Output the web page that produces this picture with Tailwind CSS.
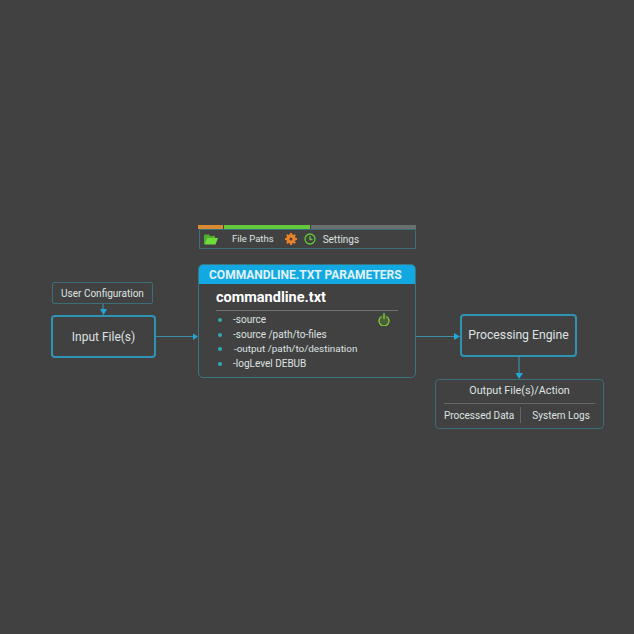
<!doctype html>
<html lang="en">
<head>
<meta charset="UTF-8" />
<title>commandline.txt diagram</title>
<script src="https://cdn.jsdelivr.net/npm/@tailwindcss/browser@4"></script>
</head>
<body class="bg-[#414141] font-[Roboto,sans-serif] text-[#dfe2e2]">
<div class="relative w-[634px] h-[634px] overflow-hidden">

  <!-- connectors -->
  <svg class="absolute left-0 top-0" width="634" height="634" viewBox="0 0 634 634" fill="none">
    <path d="M103 304V310M156 336.500H193M416 336.500H454M519 357V373" stroke="#3c8ea6" stroke-width="1.200"/>
    <path d="M100 309H107L103.500 315ZM193 333.500L198 336.500L193 340ZM454 333L460 336.500L454 340ZM515.500 373H523L519 379Z" fill="#22a9d8"/>
  </svg>

  <!-- user config -->
  <div class="absolute left-[52px] top-[282px] w-[101px] h-[22px] flex items-center justify-center border border-[#3a6f7a] rounded-[2px] text-[10px]">User Configuration</div>

  <!-- input -->
  <div class="absolute left-[51px] top-[315px] w-[105px] h-[43px] flex items-center justify-center border-2 border-[#2f93b5] rounded-[4px] text-[12px]">Input File(s)</div>

  <!-- tabs -->
  <div class="absolute left-[198px] top-[225px] w-[218px] flex flex-col">
    <div class="flex gap-px h-[4px]">
      <div class="w-[25px] bg-[#d98a35]"></div>
      <div class="w-[86px] bg-[#62c93a]"></div>
      <div class="flex-1 bg-[#6c6f6f]"></div>
    </div>
    <div class="h-[20px] ml-px flex items-center border border-[#3a6f7a] text-[9.500px]">
      <svg class="ml-[4px]" width="14" height="11" viewBox="0 0 14 11"><path d="M0 1.500Q0 .5 1 .5H5L6 2H11V4H3L1 10H0Z" fill="#4fae2d"/><path d="M3 4H14L11.500 10.500H.5Z" fill="#6fdc3c"/></svg>
      <span class="ml-[14px]">File Paths</span>
      <svg class="ml-[11px]" width="12" height="12" viewBox="0 0 12 12"><circle cx="6" cy="6" r="3.500" fill="none" stroke="#e8832b" stroke-width="2.500"/><path d="M6 0V12M0 6H12M1.800 1.800L10.200 10.200M10.200 1.800L1.800 10.200" stroke="#e8832b" stroke-width="2"/><circle cx="6" cy="6" r="1.500" fill="#5a4030"/></svg>
      <svg class="ml-[7px]" width="12" height="12" viewBox="0 0 12 12" fill="none" stroke="#62c93a" stroke-width="1.300"><circle cx="6" cy="6" r="5"/><path d="M6 3V6.500H8.500"/></svg>
      <span class="ml-[7px] text-[10px]">Settings</span>
    </div>
  </div>

  <!-- parameters card -->
  <div class="absolute left-[198px] top-[264px] w-[218px] h-[114px] border border-[#3a7682] rounded-[5px] overflow-hidden">
    <div class="h-[19px] -mx-px bg-[#12a9e2] flex items-center pl-[11px] text-[12px] font-bold text-[#e0f2f7]">COMMANDLINE.TXT PARAMETERS</div>
    <div class="pl-[17px] pr-[17px]">
      <div class="mt-[5px] text-[14.500px] leading-[17px] font-bold text-white">commandline.txt</div>
      <div class="mt-[4px] h-px bg-[#707272]"></div>
      <div class="mt-[2px] flex justify-between">
        <ul class="ml-[2px] flex flex-col text-[10px] leading-[14.500px]">
          <li class="flex items-center"><span class="w-[4px] h-[4px] rounded-full bg-[#2fa9b5] mr-[11px]"></span>-source</li>
          <li class="flex items-center"><span class="w-[4px] h-[4px] rounded-full bg-[#2fa9b5] mr-[11px]"></span>-source /path/to-files</li>
          <li class="flex items-center"><span class="w-[4px] h-[4px] rounded-full bg-[#2fa9b5] mr-[12px]"></span><span class="text-[9.900px]">-output /path/to/destination</span></li>
          <li class="flex items-center"><span class="w-[4px] h-[4px] rounded-full bg-[#2fa9b5] mr-[11px]"></span>-logLevel DEBUB</li>
        </ul>
        <svg class="mr-[8px] -mt-[1px]" width="12" height="14" viewBox="0 0 12 14" fill="none" stroke="#7ccf3a" stroke-width="1.300"><circle cx="6" cy="8" r="5" fill="#4d5f38" stroke="none"/><path d="M3.500 4.500A5 5 0 1 0 8.500 4.500"/><path d="M6 1V7"/></svg>
      </div>
    </div>
  </div>

  <!-- processing -->
  <div class="absolute left-[460px] top-[314px] w-[117px] h-[43px] flex items-center justify-center border-2 border-[#2f93b5] rounded-[4px] text-[12.200px]">Processing Engine</div>

  <!-- output -->
  <div class="absolute left-[435px] top-[379px] w-[169px] h-[50px] border border-[#3a6f7a] rounded-[4px] flex flex-col">
    <div class="h-[23px] flex items-center justify-center text-[10.800px]">Output File(s)/Action</div>
    <div class="mx-[8px] h-px bg-[#666868]"></div>
    <div class="flex items-center h-[22px] text-[10px]">
      <span class="ml-[8px]">Processed Data</span>
      <span class="ml-[6px] w-px h-[16px] bg-[#5f6666]"></span>
      <span class="ml-[11px]">System Logs</span>
    </div>
  </div>
</div>
</body>
</html>
